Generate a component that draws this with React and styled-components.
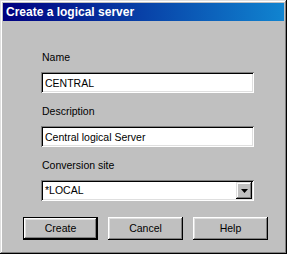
import React from 'react'
import styled, { createGlobalStyle } from 'styled-components'

const GlobalStyle = createGlobalStyle`
    html, body {
        margin: 0;
        padding: 0;
        background: #c0c0c0;
    }
    * {
        box-sizing: border-box;
    }
`

const Window = styled.div`
    width: 287px;
    height: 254px;
    padding: 3px;
    background: #c0c0c0;
    box-shadow: inset -1px -1px #000, inset 1px 1px #dfdfdf,
        inset -2px -2px #808080, inset 2px 2px #fff;
    display: flex;
    flex-direction: column;
    font-family: "Liberation Sans", Arial, sans-serif;
    font-size: 10.5px;
    color: #000;
`
const TitleBar = styled.div`
    height: 18px;
    line-height: 18px;
    padding-left: 3px;
    background: linear-gradient(to right, #000080, #1084d0);
    color: #fff;
    font-size: 12px;
    font-weight: bold;
    white-space: nowrap;
`
const Body = styled.div`
    padding: 30px 0 0 0;
    display: flex;
    flex-direction: column;
`
const Form = styled.div`
    padding-left: 38px;
    display: flex;
    flex-direction: column;
    gap: 12px;
`
const Field = styled.div`
    display: flex;
    flex-direction: column;
    gap: 8px;
`
const Label = styled.label`
    display: block;
    height: 13px;
    line-height: 13px;
    padding-left: 1px;
`
const Sunken = styled.div`
    width: 213px;
    height: 21px;
    background: #fff;
    box-shadow: inset 1px 1px #808080, inset -1px -1px #fff,
        inset 2px 2px #000, inset -2px -2px #dfdfdf;
    display: flex;
    align-items: center;
    padding: 2px;
`
const TextInput = styled.input`
    flex: 1;
    min-width: 0;
    height: 17px;
    border: none;
    outline: none;
    background: transparent;
    padding: 0 0 0 2px;
    margin: 0;
    font: inherit;
    color: #000;
`
const Selected = styled.div`
    flex: 1;
    padding-left: 2px;
    line-height: 17px;
`
const DropButton = styled.div`
    width: 16px;
    height: 17px;
    background: #c0c0c0;
    box-shadow: inset -1px -1px #000, inset 1px 1px #dfdfdf,
        inset -2px -2px #808080, inset 2px 2px #fff;
    display: flex;
    align-items: center;
    justify-content: center;
`
const Buttons = styled.div`
    margin-top: 16px;
    padding-left: 20px;
    display: flex;
    gap: 10px;
`
const Button = styled.button`
    width: 75px;
    height: 23px;
    margin: 0;
    padding: 0;
    background: #c0c0c0;
    border: ${({ $default }) => ($default ? '1px solid #000' : 'none')};
    box-shadow: inset -1px -1px #000, inset 1px 1px #fff,
        inset -2px -2px #808080, inset 2px 2px #dfdfdf;
    font-family: "Liberation Sans", Arial, sans-serif;
    font-size: 10.5px;
    color: #000;
    line-height: 1;
`

const Arrow = () => (
    <svg width="7" height="4" viewBox="0 0 7 4">
        <path d="M0 0h7L3.5 4z" fill="#000" />
    </svg>
)

export default function App() {
    return (
        <>
            <GlobalStyle />
            <Window>
                <TitleBar>Create a logical server</TitleBar>
                <Body>
                    <Form>
                        <Field>
                            <Label>Name</Label>
                            <Sunken>
                                <TextInput readOnly defaultValue="CENTRAL" />
                            </Sunken>
                        </Field>
                        <Field>
                            <Label>Description</Label>
                            <Sunken>
                                <TextInput readOnly defaultValue="Central logical Server" />
                            </Sunken>
                        </Field>
                        <Field>
                            <Label>Conversion site</Label>
                            <Sunken>
                                <Selected>*LOCAL</Selected>
                                <DropButton><Arrow /></DropButton>
                            </Sunken>
                        </Field>
                    </Form>
                    <Buttons>
                        <Button $default>Create</Button>
                        <Button>Cancel</Button>
                        <Button>Help</Button>
                    </Buttons>
                </Body>
            </Window>
        </>
    )
}
